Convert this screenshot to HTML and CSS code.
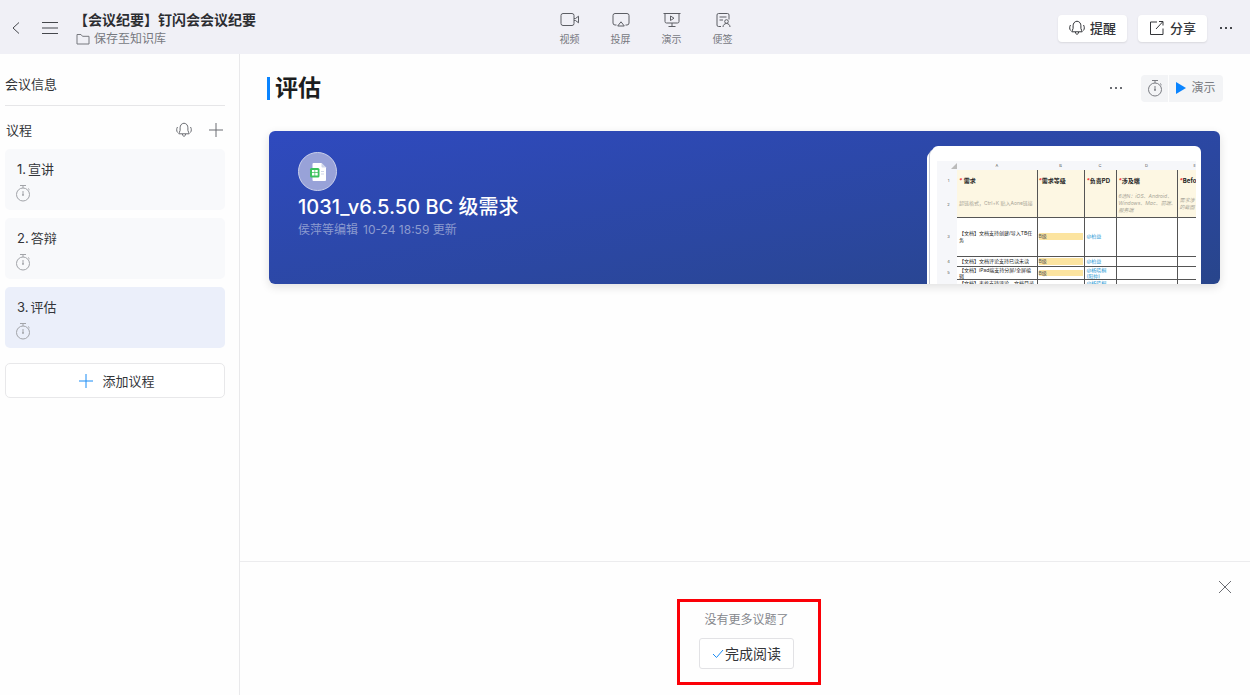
FILE: index.html
```html
<!DOCTYPE html>
<html lang="zh-CN">
<head>
  <meta charset="UTF-8" />
  <meta name="viewport" content="width=device-width, initial-scale=1.0"/>
  <title>【会议纪要】钉闪会会议纪要</title>
  <link rel="stylesheet" href="styles.css">
</head>
<body>
  <svg class="defs" aria-hidden="true">
    <symbol id="timer" viewBox="0 0 16 18">
      <circle cx="8" cy="10.5" r="6.5"/>
      <path d="M5 1.500h6M8 1.500V4M8 7v4M13 4.500l1.600 1.400"/>
      <circle cx="8" cy="11" r=".6"/>
    </symbol>
    <symbol id="bell" viewBox="0 0 16 16">
      <path d="M8 1.200c-2.600.3-3.900 2.200-3.900 4.600v2.600c0 1.400-1.300 2-1.300 3.400h10.400c0-1.400-1.300-2-1.300-3.400V5.800c0-2.400-1.300-4.300-3.900-4.600z"/>
      <path d="M6.400 12c.1 1.500.7 2.200 1.600 2.200s1.500-.7 1.600-2.200M1.500 5C.4 6.800.4 8.800 1.500 10.500M14.500 5c1.100 1.800 1.100 3.800 0 5.500"/>
    </symbol>
    <symbol id="plus" viewBox="0 0 16 16">
      <path d="M8 1v14M1 8h14"/>
    </symbol>
    <symbol id="dots" viewBox="0 0 16 16">
      <path class="fill" d="M2 7h2v2H2zM7 7h2v2H7zM12 7h2v2h-2z"/>
    </symbol>
  </svg>

  <header class="topbar">
    <button class="icon-btn" aria-label="返回"><svg class="icon back" viewBox="0 0 12 16"><path d="M9 2.500L3 8l6 5.500"/></svg></button>
    <button class="icon-btn menu" aria-label="目录"><svg class="icon" viewBox="0 0 16 16"><path d="M0 2.500h16M0 8h16M0 13.500h16"/></svg></button>
    <div class="doc">
      <h1 class="doc-title">【会议纪要】钉闪会会议纪要</h1>
      <a class="doc-save" href="#"><svg class="folder" viewBox="0 0 14 12"><path d="M1 1.500h4l1.500 1.800H13v7.700H1z"/></svg>保存至知识库</a>
    </div>

    <nav class="tools">
      <a class="tool" href="#">
        <svg viewBox="0 0 20 16"><rect x="1" y="1.500" width="13" height="12" rx="2"/><path d="M14 6.500l1.500 0 3-2.300v6.600l-3-2.300H14"/></svg>
        视频
      </a>
      <a class="tool" href="#">
        <svg viewBox="0 0 20 16"><path d="M5.500 13H4a2 2 0 0 1-2-2V3.500a2 2 0 0 1 2-2h12a2 2 0 0 1 2 2V11a2 2 0 0 1-2 2h-1.500M10 9.800l3.300 4.200H6.700z"/></svg>
        投屏
      </a>
      <a class="tool" href="#">
        <svg viewBox="0 0 20 16"><path d="M1.500 1.500h17M3 1.500v8a1.500 1.500 0 0 0 1.500 1.500h11A1.500 1.500 0 0 0 17 9.500v-8M10 11v3.500M6.500 14.500h7M8.500 4v4.500L12 6.200z"/></svg>
        演示
      </a>
      <a class="tool" href="#">
        <svg viewBox="0 0 20 16"><path d="M8 14.500H5.500A1.500 1.500 0 0 1 4 13V3a1.500 1.500 0 0 1 1.500-1.500h9A1.500 1.500 0 0 1 16 3v4.500M6.500 5h7M6.500 8h3.500M10 15c0-2 1.500-3.500 3.500-3.500S17 13 17 15"/><circle cx="13.500" cy="9.500" r="1.800"/></svg>
        便签
      </a>
    </nav>

    <div class="actions">
      <button class="action"><svg class="icon"><use href="#bell"/></svg>提醒</button>
      <button class="action"><svg class="icon" viewBox="0 0 16 16"><path d="M8 2H1.500v12.500H14V8.500M7 9l6.500-7M10 1.500h4v4"/></svg>分享</button>
      <button class="icon-btn" aria-label="更多"><svg class="icon"><use href="#dots"/></svg></button>
    </div>
  </header>

  <div class="layout">
    <aside class="sidebar">
      <h2 class="side-info">会议信息</h2>
      <div class="side-head">
        <h2>议程</h2>
        <button class="icon-btn" aria-label="提醒"><svg class="icon"><use href="#bell"/></svg></button>
        <button class="icon-btn" aria-label="新增"><svg class="icon"><use href="#plus"/></svg></button>
      </div>
      <ul class="agenda">
        <li class="agenda-item"><div class="agenda-name"><span>1.</span><span>宣讲</span></div><svg class="timer"><use href="#timer"/></svg></li>
        <li class="agenda-item"><div class="agenda-name"><span>2.</span><span>答辩</span></div><svg class="timer"><use href="#timer"/></svg></li>
        <li class="agenda-item active"><div class="agenda-name"><span>3.</span><span>评估</span></div><svg class="timer"><use href="#timer"/></svg></li>
      </ul>
      <button class="add"><svg class="icon"><use href="#plus"/></svg>添加议程</button>
    </aside>

    <main class="main">
      <div class="main-head">
        <h2 class="main-title">评估</h2>
        <button class="icon-btn" aria-label="更多"><svg class="icon"><use href="#dots"/></svg></button>
        <div class="present">
          <button class="present-timer" aria-label="计时"><svg class="timer"><use href="#timer"/></svg></button>
          <button class="present-play"><svg class="play" viewBox="0 0 10 12"><path d="M0 0l10 6-10 6z"/></svg>演示</button>
        </div>
      </div>

      <section class="card">
        <div class="card-body">
          <div class="badge">
            <svg class="badge-icon" viewBox="0 0 18 20">
              <path fill="#fff" d="M4.500 1h8L17 5.500V18a1 1 0 0 1-1 1H4.500a1 1 0 0 1-1-1V2a1 1 0 0 1 1-1z"/>
              <path fill="#cfd6ea" d="M12.500 1v3.500a1 1 0 0 0 1 1H17zM12 9h3v1h-3zM12 11.500h3v1h-3z"/>
              <rect fill="#3cc15c" x="1" y="6" width="9.500" height="9.500" rx="1.500"/>
              <path fill="#fff" d="M3 8h2.500v2.300H3zM6.200 8h2.500v2.300H6.200zM3 11.100h2.500v2.300H3zM6.200 11.100h2.500v2.300H6.200z"/>
            </svg>
          </div>
          <h3 class="card-title">1031_v6.5.50 BC 级需求</h3>
          <p class="card-meta"><span>侯萍等编辑</span><span>10-24 18:59 更新</span></p>
        </div>
        <div class="preview">
          <table class="sheet">
            <colgroup><col class="c-num"><col class="c-a"><col class="c-b"><col class="c-c"><col class="c-d"><col class="c-e"></colgroup>
            <thead>
              <tr class="cols"><th class="corner"><svg viewBox="0 0 6 6"><path d="M6 0v6H0z"/></svg></th><th>A</th><th>B</th><th>C</th><th>D</th><th class="clip">E</th></tr>
            </thead>
            <tbody>
              <tr class="names"><th>1</th><td><i>*</i> 需求</td><td><i>*</i>需求等级</td><td><i>*</i>负责PD</td><td><i>*</i>涉及端</td><td><i>*</i>Befo</td></tr>
              <tr class="hints"><th>2</th><td>超链格式，Ctrl+K 贴入Aone链接</td><td></td><td></td><td><em>6选N：iOS、Android、<br>Windows、Mac、前端、<br>服务端</em></td><td><em>需求涉<br>的截图</em></td></tr>
              <tr class="r3"><th>3</th><td>【文档】文档支持创建/导入TB任务</td><td><mark>B级</mark></td><td><a href="#">@柏益</a></td><td></td><td></td></tr>
              <tr class="r4"><th>4</th><td>【文档】文档评论支持已读未读</td><td><mark>B级</mark></td><td><a href="#">@柏益</a></td><td></td><td></td></tr>
              <tr class="r5"><th>5</th><td>【文档】iPad端支持分屏/全屏编辑</td><td><mark>B级</mark></td><td><a href="#">@杨晓桐<br>(阳仲)</a></td><td></td><td></td></tr>
              <tr class="r6"><th></th><td>【文档】表格支持评论、文档目录</td><td></td><td><a href="#">@杨晓桐</a></td><td></td><td></td></tr>
            </tbody>
          </table>
        </div>
      </section>

      <footer class="finish">
        <button class="icon-btn close" aria-label="关闭"><svg class="icon" viewBox="0 0 16 16"><path d="M2 2l12 12M14 2L2 14"/></svg></button>
        <div class="finish-box">
          <p>没有更多议题了</p>
          <button class="done"><svg class="check" viewBox="0 0 12 10"><path d="M1 5l3.500 3.500L11 1"/></svg>完成阅读</button>
        </div>
      </footer>
    </main>
  </div>
</body>
</html>
```

FILE: styles.css
```css
* {
  box-sizing: border-box;
}
body {
  margin: 0;
  min-height: 100vh;
  display: flex;
  flex-direction: column;
  font-family: Inter, "Noto Sans CJK SC", sans-serif;
  font-size: 13px;
  line-height: 20px;
  color: #333539;
  background: #fefefe;
}
h1, h2, h3, p, ul {
  margin: 0;
  padding: 0;
  font-size: inherit;
  font-weight: 400;
}
a {
  color: inherit;
  text-decoration: none;
}
button {
  font: inherit;
  color: inherit;
  padding: 0;
  border: none;
  background: none;
  cursor: pointer;
}
svg {
  display: block;
  flex: none;
  fill: none;
  stroke: currentColor;
}
.defs {
  position: absolute;
  width: 0;
  height: 0;
}
.fill {
  fill: currentColor;
  stroke: none;
}
.icon {
  width: 16px;
  height: 16px;
}
.timer {
  width: 16px;
  height: 18px;
}
.icon-btn {
  color: #6b6d73;
}

/* top bar */
.topbar {
  display: grid;
  grid-template-columns: auto auto 1fr auto 1fr;
  align-items: center;
  height: 54px;
  padding: 2px 16px 0 10px;
  background: #f0f0f6;
}
.topbar .icon-btn {
  color: #45474c;
}
.topbar .back {
  width: 12px;
}
.menu {
  margin-left: 20px;
}
.doc {
  padding: 2px 0 0 16px;
  white-space: nowrap;
}
.doc-title {
  font-size: 14px;
  font-weight: 700;
  color: #2c2d31;
}
.doc-save {
  display: flex;
  align-items: center;
  gap: 4px;
  padding-left: 2px;
  font-size: 12px;
  line-height: 18px;
  color: #77797f;
}
.folder {
  width: 14px;
  height: 12px;
}
.tools {
  display: flex;
  gap: 31px;
  padding-top: 2px;
}
.tool {
  display: flex;
  flex-direction: column;
  align-items: center;
  gap: 4px;
  font-size: 10px;
  line-height: 14px;
  color: #77797f;
}
.tool svg {
  width: 20px;
  height: 16px;
  stroke: #5c5e64;
}
.actions {
  display: flex;
  justify-content: flex-end;
  gap: 11px;
}
.action {
  display: flex;
  align-items: center;
  justify-content: center;
  gap: 5px;
  width: 69px;
  height: 27px;
  font-weight: 500;
  border-radius: 4px;
  background: #fff;
  box-shadow: 0 1px 2px rgba(0,0,0,0.1);
}

/* sidebar */
.layout {
  flex: 1;
  display: flex;
}
.sidebar {
  width: 240px;
  padding: 0 14px 0 5px;
  border-right: 1px solid #e9e9eb;
}
.side-info {
  padding: 20px 0 11px;
  border-bottom: 1px solid #e6e6e8;
}
.side-head {
  display: flex;
  align-items: center;
  gap: 16px;
  height: 43px;
  padding: 4px 1px 0 1px;
}
.side-head h2 {
  flex: 1;
}
.agenda {
  display: flex;
  flex-direction: column;
  gap: 8px;
  list-style: none;
}
.agenda-item {
  height: 61px;
  padding: 10px;
  border-radius: 5px;
  background: #f8f9fb;
}
.agenda-name {
  display: flex;
  gap: 2px;
  padding-left: 2px;
}
.agenda-item .timer {
  margin-top: 5px;
  color: #a2a4a9;
}
.agenda-item.active {
  background: #ebeffa;
}
.add {
  display: flex;
  align-items: center;
  justify-content: center;
  gap: 8px;
  width: 100%;
  height: 35px;
  margin-top: 15px;
  padding-left: 3px;
  border: 1px solid #e8e8ea;
  border-radius: 5px;
  background: #fff;
}
.add .icon {
  color: #1a8cf5;
}

/* main area */
.main {
  flex: 1;
  min-width: 0;
  display: flex;
  flex-direction: column;
}
.main-head {
  display: flex;
  align-items: center;
  gap: 17px;
  padding: 19px 27px 0 27px;
}
.main-title {
  flex: 1;
  display: flex;
  align-items: center;
  gap: 5px;
  font-size: 23px;
  line-height: 30px;
  font-weight: 700;
  color: #1c1d20;
}
.main-title::before {
  content: "";
  width: 3px;
  height: 23px;
  background: #0a84ff;
}
.present {
  display: flex;
  gap: 1px;
}
.present button {
  display: flex;
  align-items: center;
  justify-content: center;
  gap: 5px;
  height: 27px;
  font-size: 12px;
  color: #7b7d83;
  background: #f3f4f6;
}
.present .present-timer {
  width: 27px;
  border-radius: 4px 0 0 4px;
}
.present .present-play {
  width: 54px;
  border-radius: 0 4px 4px 0;
}
.play {
  width: 10px;
  height: 12px;
  fill: #0a84ff;
  stroke: none;
}
.card {
  display: flex;
  justify-content: space-between;
  height: 153px;
  margin: 28px 30px 0 29px;
  padding: 15px 19px 0 29px;
  border-radius: 6px;
  overflow: hidden;
  color: #fff;
  background: linear-gradient(170deg, #2f4abf, #28458b);
  box-shadow: 0 3px 10px rgba(0,0,0,0.12);
}
.card-body {
  padding-top: 6px;
}
.badge {
  display: flex;
  align-items: center;
  justify-content: center;
  width: 39px;
  height: 39px;
  border: 1px solid #c9cfeb;
  border-radius: 50%;
  background: #98a2d8;
}
.badge-icon {
  width: 18px;
  height: 20px;
  stroke: none;
}
.card-title {
  margin-top: 2px;
  font-size: 20px;
  line-height: 28px;
  font-weight: 500;
}
.card-meta {
  display: flex;
  gap: 5px;
  font-size: 12px;
  line-height: 18px;
  color: #8c9bcf;
}

/* spreadsheet thumbnail */
.preview {
  width: 269px;
  height: 160px;
  padding: 15px 5px 0;
  border-radius: 6px 6px 0 0;
  background: #fff;
  box-shadow: -2px 3px 0 #fff, -3px 3px 0 #c8ccd8, -5px 6px 0 #fff;
}
.sheet {
  width: 100%;
  table-layout: fixed;
  border-collapse: collapse;
  font-size: 5px;
  line-height: 7px;
  color: #222;
}
.c-num { width: 20px; }
.c-a { width: 80px; }
.c-b { width: 47px; }
.c-c { width: 32px; }
.c-d { width: 61px; }
.sheet th {
  padding: 0;
  font-size: 4px;
  font-weight: 400;
  color: #555;
  background: #f6f7fa;
}
.sheet tbody th {
  padding-left: 3px;
}
.sheet td {
  padding: 0 2px;
  overflow: hidden;
  border-right: 1px solid #555;
  border-bottom: 1px solid #555;
}
.sheet td:last-child {
  border-right: none;
  white-space: nowrap;
}
.cols { height: 9px; }
.names { height: 21px; }
.hints { height: 26px; }
.r3 { height: 39px; }
.r4 { height: 10px; }
.r5 { height: 13px; }
.r6 { height: 8px; }
.r5, .r6 {
  line-height: 6px;
}
.corner svg {
  width: 6px;
  height: 6px;
  margin-left: auto;
  fill: #bbb;
  stroke: none;
}
.sheet .clip {
  text-align: right;
}
.names td, .hints td {
  background: #fdf7e3;
}
.names td {
  font-size: 6px;
  font-weight: 700;
  border-bottom: none;
  white-space: nowrap;
}
.names i {
  color: #e33;
}
.hints td {
  color: #a9a698;
  white-space: nowrap;
}
.sheet mark {
  display: block;
  color: #555;
  background: #fce4a0;
}
.sheet td:nth-child(3) {
  padding: 0 1px;
}
.sheet a {
  color: #2c9bd6;
}

/* bottom panel */
.finish {
  position: relative;
  display: flex;
  justify-content: center;
  margin-top: auto;
  padding: 37px 0 10px 8px;
  border-top: 1px solid #ececee;
}
.close {
  position: absolute;
  top: 17px;
  right: 17px;
}
.finish-box {
  display: flex;
  flex-direction: column;
  align-items: center;
  gap: 8px;
  width: 144px;
  padding: 8px 5px 13px 0;
  border: 3px solid #fb0007;
  font-size: 12px;
  color: #85878c;
}
.done {
  display: flex;
  align-items: center;
  justify-content: center;
  gap: 1px;
  width: 95px;
  height: 31px;
  font-size: 14px;
  line-height: 20px;
  color: #333539;
  border: 1px solid #e2e2e5;
  border-radius: 3px;
  background: #fff;
}
.check {
  width: 12px;
  height: 10px;
  color: #1a8cf5;
}
```
